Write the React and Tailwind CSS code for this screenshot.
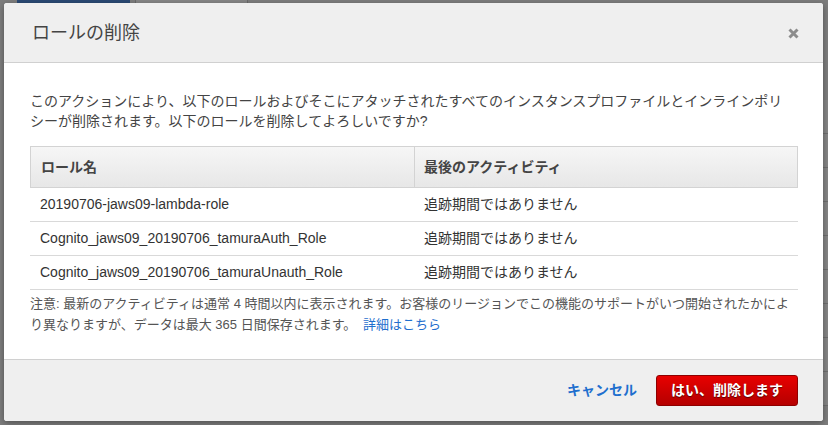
import React from "react";

const FONT = { };

export default function App() {
  const rows = [
    "20190706-jaws09-lambda-role",
    "Cognito_jaws09_20190706_tamuraAuth_Role",
    "Cognito_jaws09_20190706_tamuraUnauth_Role",
  ];
  return (
    <div className="relative h-[425px] w-[828px] overflow-hidden bg-[#7d7d7d] font-['Liberation_Sans','Noto_Sans_CJK_JP',sans-serif]">
      {/* page behind overlay */}
      <div className="flex h-[3px] gap-[5px] pl-[17px]">
        <div className="h-[3px] w-[113px] bg-[#2b4a74]" />
        <div className="h-[3px] w-[113px] border-x border-[#6a6a6a] bg-[#868686]" />
      </div>
      <div className="ml-auto mt-[97px] flex w-[5px] flex-col">
        {Array.from({ length: 9 }).map((_, i) => (
          <div key={i} className="h-[34px] border-b border-[#6e6e6e] bg-[#858585]" />
        ))}
      </div>

      {/* modal */}
      <div className="absolute left-[4px] top-[3px] flex w-[819px] flex-col overflow-hidden rounded-[3px] bg-white shadow-[0_2px_6px_rgba(0,0,0,0.35)]">
        <div className="flex h-[60px] items-center justify-between border-b border-[#d0d0d0] bg-[#efefef] pl-[28px] pr-[24px]">
          <div className="text-[18px] leading-[24px] text-[#444]">ロールの削除</div>
          <svg width="11" height="11" viewBox="0 0 11 11" className="mt-[1px]">
            <path d="M1.5 1.5 L9.5 9.5 M9.5 1.5 L1.5 9.5" stroke="#8c8c8c" strokeWidth="3" strokeLinecap="butt" />
          </svg>
        </div>
        <div className="flex h-[296px] flex-col pl-[26px] pr-[25px] pt-[28px]">
          <p className="text-[14px] leading-[20px] text-[#444]">
            このアクションにより、以下のロールおよびそこにアタッチされたすべてのインスタンスプロファイルとインラインポリ
            <br />
            シーが削除されます。以下のロールを削除してよろしいですか?
          </p>
          <div className="mt-[15px] flex flex-col">
            <div className="flex h-[42px] border border-[#d3d3d3] bg-linear-to-b from-[#f6f6f6] to-[#e7e7e7] text-[14px] font-bold text-[#444]">
              <div className="flex w-[384px] items-center border-r border-[#d3d3d3] pl-[10px]">ロール名</div>
              <div className="flex flex-1 items-center pl-[9px]">最後のアクティビティ</div>
            </div>
            {rows.map((r) => (
              <div key={r} className="flex h-[34px] items-center border-b border-[#d9d9d9] text-[14px] text-[#333]">
                <div className="w-[384px] pl-[10px]">{r}</div>
                <div className="flex-1 pl-[10px]">追跡期間ではありません</div>
              </div>
            ))}
          </div>
          <p className="mt-[3px] text-[13px] leading-[21px] text-[#555]">
            注意: 最新のアクティビティは通常 4 時間以内に表示されます。お客様のリージョンでこの機能のサポートがいつ開始されたかによ
            <br />
            り異なりますが、データは最大 365 日間保存されます。 <span className="ml-[3px] text-[#1f6fce]">詳細はこちら</span>
          </p>
        </div>
        <div className="flex h-[62px] items-center justify-end gap-[19px] border-t border-[#d0d0d0] bg-[#efefef] pr-[25px]">
          <span className="text-[14px] font-bold text-[#1f6fce]">キャンセル</span>
          <button className="flex h-[31px] w-[142px] items-center justify-center rounded-[3px] border border-[#8e0000] bg-linear-to-b from-[#e80000] to-[#b50000] text-[14px] font-bold text-white [text-shadow:0_1px_1px_rgba(0,0,0,0.55)]">
            はい、削除します
          </button>
        </div>
      </div>
    </div>
  );
}
